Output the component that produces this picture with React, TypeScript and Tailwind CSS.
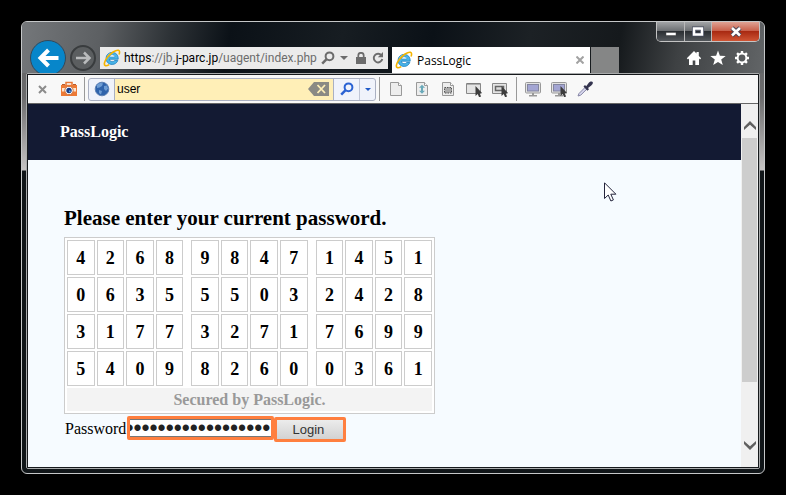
import { Fragment, useState } from "react";
import type { ReactNode } from "react";

const matrix = [
  ["4268", "9847", "1451"],
  ["0635", "5503", "2428"],
  ["3177", "3271", "7699"],
  ["5409", "8260", "0361"],
];

function IeLogo() {
  return (
    <svg viewBox="0 0 18 18" className="h-[18px] w-[18px] shrink-0" aria-hidden="true">
      <path
        d="M15.2 10.2H6.4c.2 1.6 1.3 2.5 2.8 2.5 1.1 0 1.9-.4 2.4-1.2h3.2c-.8 2.4-2.9 3.9-5.6 3.9-3.6 0-6.1-2.5-6.1-6s2.6-6 6.1-6c3.8 0 6.2 2.7 6 6.8z"
        fill="#49b4e8"
        stroke="#1b7fc0"
        strokeWidth=".8"
      />
      <path d="M6.5 7.9h5.4c-.2-1.3-1.2-2.1-2.700-2.100s-2.500.8-2.700 2.100z" fill="#fff" stroke="#1b7fc0" strokeWidth=".5" />
      <path d="M4.500 7.500c.8-1.800 2.400-3 4.600-3" fill="none" stroke="#a9e0fa" />
      <path
        d="M16 5.500c.9-2.200.7-3.800-.6-4.200C12.900.6 7.600 4.200 4.300 8.600 1.500 12.300.5 15.800 2.200 16.600c1 .4 2.500-.1 4-1"
        fill="none"
        stroke="#f4b400"
        strokeWidth="1.600"
      />
    </svg>
  );
}

function Magnifier({ className }: { className: string }) {
  return (
    <svg viewBox="0 0 14 14" className={className} fill="none" stroke="currentColor" aria-hidden="true">
      <circle cx="8.500" cy="5.300" r="3.900" strokeWidth="2" />
      <path d="M5.600 8.200 1.200 12.600" strokeWidth="2.500" />
    </svg>
  );
}

function Pointer() {
  return <path d="M9.500 5v10l2.200-2 1.400 3.200 2-.8-1.400-3.100h2.600z" fill="#3d3d3d" />;
}

function Sheet({ children }: { children?: ReactNode }) {
  return (
    <>
      <path d="M2.500 1.500h8l3 3v10h-11z" fill="#ededed" stroke="#999" />
      <path d="M10.500 1.500v3h3" fill="#fff" stroke="#999" />
      {children}
    </>
  );
}

function Monitor() {
  return (
    <>
      <rect x=".5" y="1.500" width="15" height="10.500" rx="1" fill="#e3e3e3" stroke="#999" />
      <rect x="2.500" y="3.500" width="11" height="6.500" fill="#a3a5d3" stroke="#83859f" />
      <path d="M7 12h2v2h3v1.500H4V14h3z" fill="#999" />
    </>
  );
}

const captureTools = [
  { label: "Capture page", icon: <Sheet /> },
  {
    label: "Capture full page",
    icon: (
      <Sheet>
        <path d="M8 3.800l3 3H9v3h2l-3 3-3-3h2v-3H5z" fill="#69a9b9" />
      </Sheet>
    ),
  },
  {
    label: "Capture region",
    icon: (
      <Sheet>
        <rect x="4.500" y="6.500" width="7" height="5.500" fill="#aaa" stroke="#555" strokeDasharray="1.500 1" />
      </Sheet>
    ),
  },
  {
    label: "Capture element",
    icon: (
      <>
        <path d="M.5 2.500h14v10H.5z" fill="#e4e4e4" stroke="#888" />
        <path d="M1 3h13" stroke="#777" />
        <Pointer />
      </>
    ),
  },
  {
    label: "Capture frame",
    icon: (
      <>
        <path d="M.5 2.500h14v10H.5z" fill="#e4e4e4" stroke="#888" />
        <path d="M3.500 5.500h8v4h-8z" fill="#ddd" stroke="#666" strokeWidth="1.500" />
        <Pointer />
      </>
    ),
  },
];

const screenTools = [
  { label: "Capture screen", icon: <Monitor /> },
  {
    label: "Capture window",
    icon: (
      <>
        <Monitor />
        <Pointer />
      </>
    ),
  },
  {
    label: "Pick color",
    icon: (
      <>
        <path d="M1 15l1-2.500 6.500-6.500 1.700 1.700L3.700 14.200z" fill="#d8d8ee" stroke="#8584a5" />
        <path d="M6.500 5.500 8 4l1.200 1.200 2.600-3.400C13 .2 15.500.2 15.800 1.300c.3 1.200-.5 2.300-1.500 3.100L11 7l1 1.200-1.600 1.500z" fill="#34344f" />
      </>
    ),
  },
];

function ToolGroup({ tools }: { tools: typeof captureTools }) {
  return (
    <div className="flex items-center gap-2.5 px-2">
      {tools.map((tool) => (
        <button key={tool.label} type="button" aria-label={tool.label}>
          <svg viewBox="0 0 16 16" className="h-4 w-4" fill="none">
            {tool.icon}
          </svg>
        </button>
      ))}
    </div>
  );
}

function WindowControls() {
  return (
    <div className="mr-1 flex h-5 divide-x divide-[#b9b9b9] overflow-hidden rounded-b-[5px] border border-t-0 border-[#c4c4c4]">
      <button
        type="button"
        aria-label="Minimize"
        className="flex w-7 items-center justify-center bg-[linear-gradient(#a2a4a6,#686b6e_50%,#2b2f33_50%,#53575b)]"
      >
        <svg viewBox="0 0 12 12" className="h-3 w-3">
          <path d="M1 6.500h10v3H1z" fill="#fff" stroke="#444" strokeWidth=".5" />
        </svg>
      </button>
      <button
        type="button"
        aria-label="Maximize"
        className="flex w-[27px] items-center justify-center bg-[linear-gradient(#a2a4a6,#686b6e_50%,#2b2f33_50%,#53575b)]"
      >
        <svg viewBox="0 0 12 12" className="h-3 w-3" fill="none">
          <path d="M2 2.500h8v6H2z" stroke="#444a5c" strokeWidth="4" />
          <path d="M2 2.500h8v6H2z" stroke="#fff" strokeWidth="2.500" />
        </svg>
      </button>
      <button
        type="button"
        aria-label="Close"
        className="flex w-[47px] items-center justify-center bg-[linear-gradient(#dfa294,#c75b45_50%,#a92a12_50%,#cf5534)]"
      >
        <svg viewBox="0 0 12 12" className="h-3 w-3">
          <path d="M2 2l8 7.500M10 2 2 9.500" stroke="#4a4858" strokeWidth="4.500" />
          <path d="M2 2l8 7.500M10 2 2 9.500" stroke="#fff" strokeWidth="2.600" />
        </svg>
      </button>
    </div>
  );
}

function BrowserActions() {
  return (
    <div className="mr-3.5 mb-[7px] flex gap-2 text-white">
      <button type="button" aria-label="Home">
        <svg viewBox="0 0 16 16" className="h-4 w-4" fill="currentColor">
          <path d="M8 1 .8 8.300 2 9.500l1-1V15h3.700v-4.500h2.600V15H13V8.500l1 1 1.200-1.200L12.800 6V2h-2.300v1.600z" />
        </svg>
      </button>
      <button type="button" aria-label="Favorites">
        <svg viewBox="0 0 16 16" className="h-4 w-4" fill="currentColor">
          <path d="M8 .5l1.900 5.200 5.800.3-4.500 3.500 1.600 5.600L8 11.900l-4.800 3.200 1.600-5.600L.3 6l5.800-.3z" />
        </svg>
      </button>
      <button type="button" aria-label="Tools">
        <svg viewBox="0 0 16 16" className="h-4 w-4" fill="none" stroke="currentColor">
          <circle cx="8" cy="8" r="4.400" strokeWidth="2" />
          <path
            d="M8 1v2.500M8 12.500V15M1 8h2.500M12.500 8H15M3.050 3.050l1.800 1.800M11.150 11.150l1.800 1.800M3.050 12.950l1.800-1.800M11.150 4.850l1.800-1.800"
            strokeWidth="2.400"
          />
        </svg>
      </button>
    </div>
  );
}

function TitleBar() {
  return (
    <header className="flex h-[51px] items-end overflow-hidden rounded-t-[5px] bg-[linear-gradient(100deg,#74777a,#5c5f62_11%,#2d3236_20%,#0b1117_28%,#171d22_43%,#0b1117_55%,#1c2125_68%,#15191c_80%,#3e4143_88%,#626567)] pl-2">
      <button
        type="button"
        aria-label="Back"
        className="mt-[18px] h-9 w-9 shrink-0 self-start rounded-full border border-[#34495a] bg-[#0786ca]"
      >
        <svg viewBox="0 0 34 34" fill="none" stroke="#fff" strokeWidth="4">
          <path d="M27.500 17H10M17.500 9 9.500 17l8 8" />
        </svg>
      </button>
      <button
        type="button"
        aria-label="Forward"
        className="mb-0.5 ml-1 h-[26px] w-[26px] shrink-0 rounded-full border-2 border-[#393c3e] bg-[#5b5e60]"
      >
        <svg viewBox="0 0 22 22" fill="none" stroke="#b9bbbc" strokeWidth="2.500">
          <path d="M4 11h13M12 5.500l5.500 5.500-5.500 5.500" />
        </svg>
      </button>
      <div className="mb-1 ml-1 flex h-[22px] w-72 items-center bg-[#ebebeb] pr-1 pl-[3px] text-[#6c6c6c]">
        <IeLogo />
        <div className="ml-[3px] min-w-0 flex-1 overflow-hidden font-[Roboto,sans-serif] text-[12px] leading-5 whitespace-nowrap">
          <span className="text-black">https</span>://jb.<span className="text-black">j-parc.jp</span>/uagent/index.php
        </div>
        <button type="button" aria-label="Search">
          <Magnifier className="h-3.5 w-3.5" />
        </button>
        <button type="button" aria-label="Show address bar list" className="ml-[5px]">
          <svg viewBox="0 0 8 4" className="h-1 w-2" fill="currentColor">
            <path d="M0 0h8L4 4z" />
          </svg>
        </button>
        <svg viewBox="0 0 10 12" className="ml-2 h-3 w-2.5" aria-hidden="true">
          <path d="M0 5h10v7H0z" fill="currentColor" />
          <path d="M2.300 5V3.500a2.700 2.700 0 0 1 5.400 0V5" fill="none" stroke="currentColor" strokeWidth="1.700" />
        </svg>
        <button type="button" aria-label="Refresh" className="ml-1.5">
          <svg viewBox="0 0 12 12" className="h-3 w-3">
            <path d="M9.500 3.500A4.300 4.300 0 1 0 10.300 7" fill="none" stroke="currentColor" strokeWidth="1.900" />
            <path d="M11 0v5.200H5.800z" fill="currentColor" />
          </svg>
        </button>
      </div>
      <div className="ml-1 flex h-[26px] w-[198px] items-center bg-white pr-1.5 pl-[3px] font-['Open_Sans',sans-serif] text-[12px] text-black">
        <IeLogo />
        <span className="ml-1 flex-1 pt-0.5">PassLogic</span>
        <button type="button" aria-label="Close tab">
          <svg viewBox="0 0 8 8" className="h-2 w-2" stroke="#a2a2a2" strokeWidth="2">
            <path d="M.5.5l7 7M7.500.5l-7 7" />
          </svg>
        </button>
      </div>
      <button type="button" aria-label="New tab" className="ml-px h-[26px] w-7 bg-[#858686]" />
      <div className="ml-auto flex flex-col items-end justify-between self-stretch">
        <WindowControls />
        <BrowserActions />
      </div>
    </header>
  );
}

function SearchToolbar() {
  const [query, setQuery] = useState("user");

  return (
    <div className="flex h-[29px] items-center border-b border-[#666] bg-[#f8f8f8]">
      <button type="button" aria-label="Close toolbar" className="ml-2.5">
        <svg viewBox="0 0 9 9" className="h-[9px] w-[9px]" stroke="#8c8c8c" strokeWidth="2">
          <path d="M1 1l7 7M8 1 1 8" />
        </svg>
      </button>
      <button type="button" aria-label="Capture" className="ml-[13px]">
        <svg viewBox="0 0 18 18" className="h-[18px] w-[18px]">
          <path d="M6 2.500h6v3H6z" fill="#fff" stroke="#e77735" strokeWidth="1.500" />
          <path d="M1 5h16v11H1z" fill="#ed7a36" />
          <path d="M2 8h14v3.500H2z" fill="#ffe4cc" />
          <path d="M2 4h3v1H2zM13 4h3v1h-3z" fill="#b95b2c" />
          <circle cx="9" cy="10.500" r="4.200" fill="#fff" stroke="#c9713e" />
          <circle cx="9" cy="10.500" r="2.700" fill="#173a85" />
          <circle cx="9.800" cy="11.300" r="1" fill="#50a5e8" />
        </svg>
      </button>
      <span className="ml-1.5 h-6 w-px bg-[#999]" />
      <form
        className="ml-[3px] flex h-[23px] w-72 overflow-hidden rounded-[3px] border border-[#aab0c2] bg-[#f0f3fb]"
        onSubmit={(event) => event.preventDefault()}
      >
        <button type="button" aria-label="Search provider" className="flex w-[26px] items-center justify-center border-r border-[#aab0c2]">
          <svg viewBox="0 0 16 16" className="h-4 w-4">
            <circle cx="8" cy="8" r="6.800" fill="#2f63ac" stroke="#5f82b5" />
            <path d="M3 4c2-2.500 5-2.500 6-1.500L8 5 5.500 6.500 3 7zM10 5l3-.5 1 3-2 2.500-2-2zM5 9l3 1-1 3.500L5 12z" fill="#6f9dd4" />
          </svg>
        </button>
        <div className="flex min-w-0 flex-1 items-center bg-[#ffefb7] pr-1">
          <input
            aria-label="Search words"
            value={query}
            onChange={(event) => setQuery(event.target.value)}
            className="min-w-0 flex-1 bg-transparent pl-0.5 font-['Liberation_Sans',sans-serif] text-[12px] text-black outline-none"
          />
          <button type="button" aria-label="Clear" onClick={() => setQuery("")}>
            <svg viewBox="0 0 21 14" className="h-3.5 w-[21px]">
              <path d="M0 7l6-7h15v14H6z" fill="#8b8a84" />
              <path d="M9.500 3l7.500 8M17 3l-7.500 8" stroke="#ffefb7" strokeWidth="1.800" />
            </svg>
          </button>
        </div>
        <button type="submit" aria-label="Go" className="flex w-[26px] items-center justify-center border-l border-[#aab0c2] text-[#2b63d3]">
          <Magnifier className="h-3.5 w-3.5" />
        </button>
        <button type="button" aria-label="Search options" className="flex w-4 items-center justify-center border-l border-[#c0c6d6]">
          <svg viewBox="0 0 6 3" className="h-[3px] w-1.5" fill="#1f5ac8">
            <path d="M0 0h6L3 3z" />
          </svg>
        </button>
      </form>
      <span className="ml-[3px] h-6 w-px bg-[#999]" />
      <ToolGroup tools={captureTools} />
      <span className="h-6 w-px bg-[#999]" />
      <ToolGroup tools={screenTools} />
    </div>
  );
}

function ScrollBar() {
  return (
    <div className="flex w-[17px] flex-col bg-[#f0f0f0]">
      <button type="button" aria-label="Scroll up" className="flex h-[34px] items-center justify-center pt-2">
        <svg viewBox="0 0 12 9" className="h-[9px] w-3" fill="#606060">
          <path d="M6 0l6 6v3L6 3.800 0 9V6z" />
        </svg>
      </button>
      <div className="flex-1">
        <div className="mx-px h-[84%] bg-[#cdcdcd]" />
      </div>
      <button type="button" aria-label="Scroll down" className="flex h-[38px] items-center justify-center pb-1.5">
        <svg viewBox="0 0 12 9" className="h-[9px] w-3" fill="#606060">
          <path d="M6 9 0 3V0l6 5.200L12 0v3z" />
        </svg>
      </button>
    </div>
  );
}

function MatrixTable() {
  return (
    <table className="mt-[7px] w-[371px] table-fixed border-separate border-spacing-[2px] border border-[#ccc] bg-white text-center font-bold">
      <colgroup>
        <col span={4} />
        <col className="w-1" />
        <col span={4} />
        <col className="w-1" />
        <col span={4} />
      </colgroup>
      <tbody>
        {matrix.map((row, rowIndex) => (
          <tr key={rowIndex}>
            {row.map((group, groupIndex) => (
              <Fragment key={groupIndex}>
                {groupIndex > 0 && <td className="p-0" />}
                {group.split("").map((digit, index) => (
                  <td key={index} className="h-[35px] border border-[#ccc] p-0 text-[18px] leading-6">
                    {digit}
                  </td>
                ))}
              </Fragment>
            ))}
          </tr>
        ))}
        <tr>
          <td colSpan={14} className="h-[23px] bg-[#f3f3f3] p-0 text-[16px] leading-5 text-[#999]">
            Secured by PassLogic.
          </td>
        </tr>
      </tbody>
    </table>
  );
}

function LoginForm() {
  const [password, setPassword] = useState("passlogic-password");

  return (
    <form className="mt-px ml-px flex items-start" onSubmit={(event) => event.preventDefault()}>
      <label htmlFor="password" className="pt-0.5 text-[16px] leading-6">
        Password
      </label>
      <div className="mt-px ml-px w-[147px] rounded-[2px] border-3 border-[#ff7f3f]">
        <input
          id="password"
          type="password"
          value={password}
          onChange={(event) => setPassword(event.target.value)}
          className="block h-[18px] w-full border-y border-[#777] bg-white pr-px font-['Liberation_Sans',sans-serif] text-[23px] leading-4 text-[#222] outline-none [direction:rtl]"
        />
      </div>
      <button
        type="submit"
        className="mt-0.5 h-[25px] w-[72px] rounded-[2px] border-3 border-[#ff7f3f] bg-linear-to-b from-[#ececec] to-[#d2d2d2] pr-1 font-['Liberation_Sans',sans-serif] text-[13px] leading-4 text-[#333]"
      >
        Login
      </button>
    </form>
  );
}

function LoginPage() {
  return (
    <main className="relative flex-1 bg-[#f6fbff] font-['Liberation_Serif',serif] text-black">
      <div className="flex h-14 items-center bg-[#131a33] pl-8 text-[16px] font-bold text-white">PassLogic</div>
      <div className="pt-[46px] pl-9">
        <h1 className="text-[21px] leading-6 font-bold">Please enter your current password.</h1>
        <MatrixTable />
        <LoginForm />
      </div>
      <svg viewBox="0 0 13 20" className="absolute top-[78px] left-[576px] h-5 w-[13px]" aria-hidden="true">
        <path d="M.5.8v15.700l3.700-3.500 2.700 6 2.500-1.100-2.600-5.700h5.100z" fill="#fff" stroke="#24243c" />
      </svg>
    </main>
  );
}

export default function App() {
  return (
    <div className="flex h-screen flex-col bg-black p-[21px]">
      <div className="flex flex-1 flex-col rounded-[6px] border border-[#c5c7c8] bg-[linear-gradient(#5f6163,#6b6b6c_75px,#c6c4c4_148px,#101518_149px)]">
        <TitleBar />
        <div className="mx-1 mb-1 flex flex-1 flex-col rounded-[2px] border border-[#a9abac]">
          <div className="flex flex-1 flex-col border border-[#16191c]">
            <SearchToolbar />
            <div className="flex flex-1">
              <LoginPage />
              <ScrollBar />
            </div>
          </div>
        </div>
      </div>
    </div>
  );
}
